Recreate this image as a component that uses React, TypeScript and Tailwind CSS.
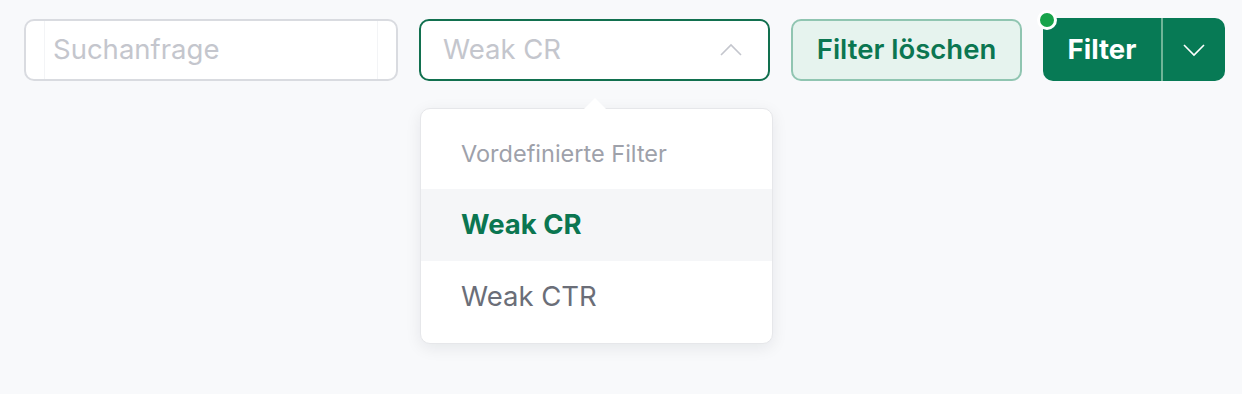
import React from 'react';

const font = { fontFamily: 'Inter, "Noto Sans", sans-serif' };

export default function App() {
  return (
    <div className="min-h-[394px] w-full bg-[#f8f9fb]" style={font}>
      <div className="flex items-start gap-[21px] pl-[24px] pt-[19px]">
        {/* search */}
        <div className="flex h-[62px] w-[374px] items-stretch rounded-[10px] border-2 border-[#d9dbe0] bg-white px-[18px]">
          <div className="flex flex-1 items-center border-x border-[#f3f4f6] px-[8px]">
            <span className="text-[27.5px] text-[#c4c6cd]">Suchanfrage</span>
          </div>
        </div>

        {/* select with open menu */}
        <div className="relative">
          <div className="flex h-[62px] w-[351px] items-center justify-between rounded-[10px] border-2 border-[#12704f] bg-white pl-[22px] pr-[26px]">
            <span className="text-[27.5px] text-[#c4c6cd]">Weak CR</span>
            <svg width="22" height="14" viewBox="0 0 22 14" fill="none" stroke="#c4c6cd" strokeWidth="1.6">
              <path d="M1 12 L11 2 L21 12" />
            </svg>
          </div>

          <div className="absolute left-[1px] top-[89px] w-[353px] rounded-[10px] border border-[#e6e7ea] bg-white py-[10px] shadow-[0_4px_16px_rgba(15,23,42,0.08)]">
            <div className="absolute -top-[11px] left-[163px] h-0 w-0 border-x-[11px] border-b-[11px] border-x-transparent border-b-white" />
            <div className="flex h-[70px] items-center px-[40px] text-[23.5px] text-[#9ea1aa]">Vordefinierte Filter</div>
            <div className="flex h-[72px] items-center bg-[#f5f6f8] px-[40px] text-[27.5px] font-bold text-[#0b7651]">Weak CR</div>
            <div className="flex h-[72px] items-center px-[40px] text-[27.5px] text-[#6b6e78]">Weak CTR</div>
          </div>
        </div>

        {/* clear */}
        <button className="flex h-[62px] w-[231px] items-center justify-center rounded-[10px] border-2 border-[#90c5b1] bg-[#e6f3ee] text-[27.5px] font-semibold text-[#0b7651]">
          Filter löschen
        </button>

        {/* split button */}
        <div className="relative -mt-[1px] flex h-[63px] w-[182px] items-stretch rounded-[10px] bg-[#077a55]">
          <span className="absolute -left-[6px] -top-[8px] h-[20px] w-[20px] rounded-full border-[3px] border-white bg-[#17a34a]" />
          <button className="flex w-[118px] items-center justify-center text-[27.5px] font-bold text-white">Filter</button>
          <div className="w-[2px] bg-[#6fb598]" />
          <button className="flex flex-1 items-center justify-center">
            <svg width="22" height="14" viewBox="0 0 22 14" fill="none" stroke="white" strokeWidth="1.6">
              <path d="M1 2 L11 12 L21 2" />
            </svg>
          </button>
        </div>
      </div>
    </div>
  );
}
